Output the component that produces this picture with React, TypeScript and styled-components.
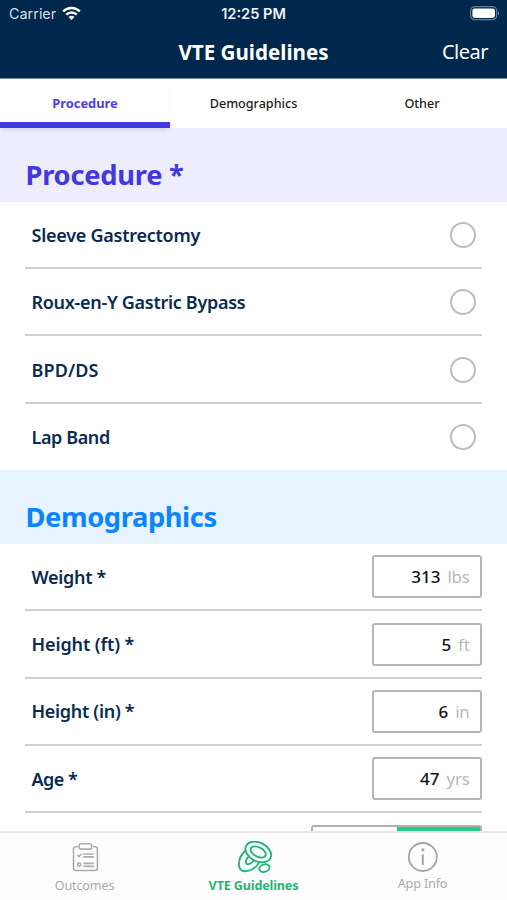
import React from 'react';
import styled, { createGlobalStyle } from 'styled-components';

const Global = createGlobalStyle`
  *, *::before, *::after { box-sizing: border-box; }
  body { margin: 0; background: #fff; overflow: hidden; }
  button { appearance: none; border: 0; padding: 0; background: none; color: inherit; font: inherit; }
`;

const Screen = styled.div`
  width: 507px;
  height: 900px;
  display: flex;
  flex-direction: column;
  overflow: hidden;
  background: #fff;
  font-family: 'Noto Sans', 'Open Sans', sans-serif;
`;

const Header = styled.header`
  flex: none;
  height: 79px;
  background: #00274c;
  color: #fff;
  border-bottom: 1px solid #6f8aa5;
`;

const StatusBar = styled.div`
  display: grid;
  grid-template-columns: 1fr auto 1fr;
  align-items: center;
  height: 27px;
  padding: 0 7px 0 9px;
  font-family: Inter, 'Liberation Sans', sans-serif;
`;

const Carrier = styled.div`
  display: flex;
  align-items: center;
  gap: 6px;
  font-size: 14.4px;
  color: #d5dee7;
`;

const Clock = styled.time`
  margin-left: -2px;
  font-size: 14.6px;
  font-weight: 600;
  color: #eef2f6;
`;

const BatteryIcon = styled.svg`
  justify-self: end;
`;

const NavBar = styled.div`
  display: grid;
  grid-template-columns: 1fr auto 1fr;
  align-items: center;
  height: 49px;
  padding: 0 19px;
`;

const Title = styled.h1`
  grid-column: 2;
  margin: 0;
  font-size: 20.6px;
  line-height: 28px;
  font-weight: 700;
`;

const ClearButton = styled.button`
  justify-self: end;
  font-size: 20px;
  line-height: 28px;
  letter-spacing: -0.5px;
`;

const Tabs = styled.nav`
  flex: none;
  display: grid;
  grid-template-columns: 170px 1fr 170px;
  height: 49px;
`;

const Tab = styled.button<{ $active?: boolean }>`
  font-size: ${p => (p.$active ? 12.9 : 12.6)}px;
  font-weight: ${p => (p.$active ? 700 : 500)};
  color: ${p => (p.$active ? '#4b3fe0' : '#1c1c1e')};
  border-top: 5px solid transparent;
  border-bottom: 6px solid ${p => (p.$active ? '#4238e0' : 'transparent')};
  box-shadow: ${p => (p.$active ? '0 4px 4px -2px rgba(60, 60, 110, 0.14)' : 'none')};
  z-index: 1;
`;

const Content = styled.main`
  flex: 1;
  min-height: 0;
  overflow: hidden;
`;

const SectionTitle = styled.h2<{ $color: string; $tint: string; $tracking: number }>`
  margin: 0;
  height: 73.9px;
  padding: 28px 25.5px 0;
  background: ${p => p.$tint};
  color: ${p => p.$color};
  font-size: 27.3px;
  line-height: 38px;
  font-weight: 700;
  letter-spacing: ${p => p.$tracking}px;
`;

const List = styled.div`
  padding: 0 25px;
`;

const Row = styled.div`
  display: flex;
  align-items: center;
  justify-content: space-between;
  height: 67.3px;
  padding-left: 6.5px;
  border-bottom: 2px solid #cfcfcf;
  &:last-child { border-bottom-color: transparent; }
`;

const ChoiceRow = styled(Row)`
  padding-top: 1px;
  &:last-child { height: 66.5px; }
`;

const Label = styled.span<{ $tracking: number }>`
  font-size: 18px;
  line-height: 26px;
  font-weight: 600;
  letter-spacing: ${p => p.$tracking}px;
  color: #0a2b50;
`;

const Radio = styled.span`
  width: 26px;
  height: 26px;
  margin-right: 6px;
  border: 2px solid #bdbdbd;
  border-radius: 50%;
`;

const Field = styled.div`
  display: flex;
  align-items: center;
  justify-content: flex-end;
  gap: 7px;
  width: 110px;
  height: 43px;
  padding-right: 10.5px;
  border: 2px solid #b5b5b5;
  border-radius: 3px;
  font-size: 17px;
`;

const Value = styled.span`
  font-weight: 500;
  color: #151515;
`;

const Unit = styled.span`
  color: #b9b9b9;
  letter-spacing: -0.3px;
`;

const Segmented = styled.div`
  display: grid;
  grid-template-columns: 1fr 1fr;
  width: 171px;
  height: 43px;
  border: 2px solid #b0b0b0;
  border-radius: 3px;
`;

const Segment = styled.span<{ $on?: boolean }>`
  background: ${p => (p.$on ? '#27cb8b' : '#fff')};
`;

const BottomBar = styled.nav`
  flex: none;
  display: grid;
  grid-template-columns: repeat(3, 1fr);
  height: 69px;
  background: #fdfdfd;
  border-top: 2px solid #e8e8e8;
`;

const BottomItem = styled.button<{ $active?: boolean; $lift?: boolean }>`
  display: flex;
  flex-direction: column;
  align-items: center;
  gap: ${p => (p.$lift ? 2 : 4)}px;
  padding-top: 8px;
  font-size: 12.6px;
  line-height: 18px;
  font-weight: ${p => (p.$active ? 700 : 400)};
  letter-spacing: -0.15px;
  color: ${p => (p.$active ? '#1fb574' : '#ababab')};
`;

const WifiIcon = () => (
  <svg width="19" height="15" viewBox="0 0 19 15" fill="none" stroke="#fff" strokeWidth="2.4">
    <path d="M1.2 5.4C5.8 .8 13.2 .8 17.8 5.4" />
    <path d="M4.3 8.7c2.9-2.9 7.5-2.9 10.4 0" />
    <path d="M9.5 14l-3-3.1c1.7-1.5 4.3-1.5 6 0z" fill="#fff" stroke="none" />
  </svg>
);

const Battery = () => (
  <BatteryIcon width="30" height="15" viewBox="0 0 30 15">
    <rect x=".7" y=".7" width="26" height="13" rx="4" fill="none" stroke="#647f99" strokeWidth="1.2" />
    <rect x="2.4" y="2.4" width="22.6" height="9.6" rx="2.4" fill="#fff" />
    <path d="M28 5v4.4c1.7-.8 1.7-3.6 0-4.4z" fill="#647f99" />
  </BatteryIcon>
);

const ClipboardIcon = () => (
  <svg width="28" height="32" viewBox="-1.5 -.5 30 33" fill="none" stroke="#adadad" strokeWidth="1.7" strokeLinecap="round" strokeLinejoin="round">
    <path d="M5 5H3.9C2.3 5 1.2 6 1.2 7.6v20.2c0 1.6 1.1 2.7 2.7 2.7h20.2c1.6 0 2.7-1.1 2.7-2.7V7.6C26.8 6 25.7 5 24.1 5H23" />
    <rect x="7.3" y="1.8" width="13.4" height="5.8" rx="2" />
    <path d="M5.7 14.3l1.4 1.3 2.3-2.5" />
    <path d="M12.3 12.7h10M12.3 15.9h10M12.3 22.8h10M12.3 26h10" />
    <circle cx="7.3" cy="24.2" r="1.7" />
  </svg>
);

const CellsIcon = () => (
  <svg width="38" height="32" viewBox="0 0 38 32" fill="none" stroke="#21b575" strokeWidth="1.9" strokeLinecap="round">
    <ellipse cx="23.3" cy="11" rx="13.6" ry="9.3" transform="rotate(27 23.3 11)" />
    <ellipse cx="23.2" cy="11" rx="8.2" ry="4.7" transform="rotate(27 23.2 11)" />
    <path d="M10.3 9.8C6.2 13.5 3.8 19 3.9 23.8c.1 4 2.5 6.6 6.2 6.5 5-.1 10.9-3.6 14.4-9.1" />
    <path d="M12.8 16.4c-1.7 2.2-2.4 4.5-1.6 6 1.1 1.9 5.3.3 7.4-2.6" />
    <ellipse cx="29.4" cy="27.1" rx="5.2" ry="3.7" transform="rotate(-18 29.4 27.1)" />
  </svg>
);

const InfoIcon = () => (
  <svg width="32" height="32" viewBox="0 0 32 32" fill="none" stroke="#a5a5a5" strokeWidth="1.8">
    <circle cx="15.8" cy="16" r="14" />
    <path d="M15.8 13.3v10.8" strokeWidth="2" />
    <circle cx="15.8" cy="8.8" r="1.6" fill="#a5a5a5" stroke="none" />
  </svg>
);

const procedures = [
  { name: 'Sleeve Gastrectomy', tracking: -0.25 },
  { name: 'Roux-en-Y Gastric Bypass', tracking: -0.3 },
  { name: 'BPD/DS', tracking: 0.1 },
  { name: 'Lap Band', tracking: -0.4 },
];

const measures = [
  { name: 'Weight *', tracking: -0.3, value: 313, unit: 'lbs' },
  { name: 'Height (ft) *', tracking: -0.1, value: 5, unit: 'ft' },
  { name: 'Height (in) *', tracking: -0.3, value: 6, unit: 'in' },
  { name: 'Age *', tracking: -0.5, value: 47, unit: 'yrs' },
];

export default function App() {
  return (
    <Screen>
      <Global />
      <Header>
        <StatusBar>
          <Carrier>Carrier<WifiIcon /></Carrier>
          <Clock>12:25 PM</Clock>
          <Battery />
        </StatusBar>
        <NavBar>
          <Title>VTE Guidelines</Title>
          <ClearButton>Clear</ClearButton>
        </NavBar>
      </Header>
      <Tabs>
        <Tab $active>Procedure</Tab>
        <Tab>Demographics</Tab>
        <Tab>Other</Tab>
      </Tabs>
      <Content>
        <SectionTitle $color="#4338e0" $tint="#eeedfd" $tracking={-0.25}>Procedure *</SectionTitle>
        <List>
          {procedures.map(p => (
            <ChoiceRow key={p.name}>
              <Label $tracking={p.tracking}>{p.name}</Label>
              <Radio />
            </ChoiceRow>
          ))}
        </List>
        <SectionTitle $color="#0a84ff" $tint="#e7f3ff" $tracking={-0.4}>Demographics</SectionTitle>
        <List>
          {measures.map(m => (
            <Row key={m.name}>
              <Label $tracking={m.tracking}>{m.name}</Label>
              <Field>
                <Value>{m.value}</Value>
                <Unit>{m.unit}</Unit>
              </Field>
            </Row>
          ))}
          <Row>
            <span />
            <Segmented>
              <Segment />
              <Segment $on />
            </Segmented>
          </Row>
        </List>
      </Content>
      <BottomBar>
        <BottomItem><ClipboardIcon />Outcomes</BottomItem>
        <BottomItem $active><CellsIcon />VTE Guidelines</BottomItem>
        <BottomItem $lift><InfoIcon />App Info</BottomItem>
      </BottomBar>
    </Screen>
  );
}
